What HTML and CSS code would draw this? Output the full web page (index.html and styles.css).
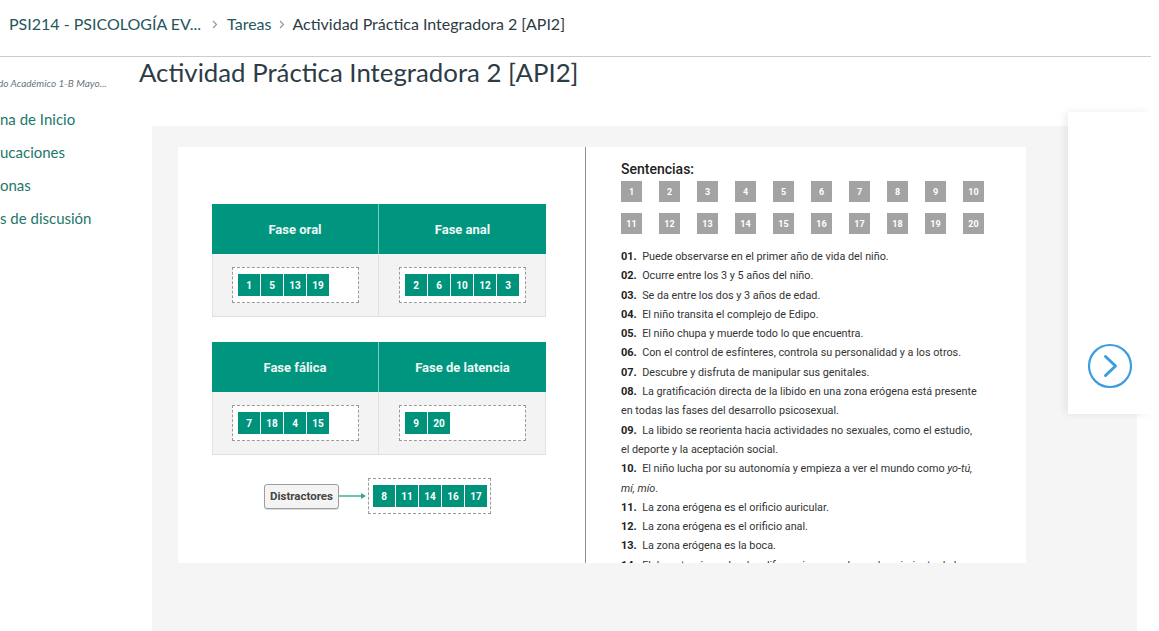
FILE: index.html
```html
<!DOCTYPE html>
<html lang="es">
<head>
<meta charset="utf-8">
<title>Actividad Práctica Integradora 2 [API2]</title>
<link rel="stylesheet" href="styles.css">
</head>
<body>
<div class="app">
  <header class="topbar">
    <nav class="crumbs">
      <a class="crumb-link">PSI214 - PSICOLOGÍA EV...</a>
      <svg class="chev" width="6" height="9" viewBox="0 0 6 9"><path d="M1 1l3.5 3.5L1 8" fill="none" stroke="#8b969e" stroke-width="1.1"/></svg>
      <a class="crumb-link">Tareas</a>
      <svg class="chev chev-last" width="6" height="9" viewBox="0 0 6 9"><path d="M1 1l3.5 3.5L1 8" fill="none" stroke="#8b969e" stroke-width="1.1"/></svg>
      <span class="crumb-current">Actividad Práctica Integradora 2 [API2]</span>
    </nav>
  </header>

  <div class="layout">
    <aside class="sidebar">
      <div class="term">do Académico 1-B Mayo...</div>
      <ul class="nav">
        <li>na de Inicio</li>
        <li>ucaciones</li>
        <li>onas</li>
        <li>s de discusión</li>
      </ul>
    </aside>

    <main class="content">
      <h1 class="title">Actividad Práctica Integradora 2 [API2]</h1>
      <div class="viewer">
        <div class="slide">
          <div class="slide-left">
            <div class="phase-table">
              <div class="phase-head">Fase oral</div>
              <div class="phase-head">Fase anal</div>
              <div class="phase-cell"><div class="drop"><span class="chip">1</span><span class="chip">5</span><span class="chip">13</span><span class="chip">19</span></div></div>
              <div class="phase-cell"><div class="drop"><span class="chip">2</span><span class="chip">6</span><span class="chip">10</span><span class="chip">12</span><span class="chip">3</span></div></div>
            </div>
            <div class="phase-table">
              <div class="phase-head">Fase fálica</div>
              <div class="phase-head">Fase de latencia</div>
              <div class="phase-cell"><div class="drop"><span class="chip">7</span><span class="chip">18</span><span class="chip">4</span><span class="chip">15</span></div></div>
              <div class="phase-cell"><div class="drop"><span class="chip">9</span><span class="chip">20</span></div></div>
            </div>
            <div class="distract-row">
              <div class="distract-label">Distractores</div>
              <svg class="arrow" width="29" height="8" viewBox="0 0 29 8"><path d="M0 4h23" stroke="#2fa896" stroke-width="1.4"/><path d="M22 1l5 3-5 3z" fill="#2fa896"/></svg>
              <div class="drop drop-distract"><span class="chip">8</span><span class="chip">11</span><span class="chip">14</span><span class="chip">16</span><span class="chip">17</span></div>
            </div>
          </div>
          <div class="slide-right">
            <div class="sent-title">Sentencias:</div>
            <div class="num-grid">
              <span class="num">1</span><span class="num">2</span><span class="num">3</span><span class="num">4</span><span class="num">5</span><span class="num">6</span><span class="num">7</span><span class="num">8</span><span class="num">9</span><span class="num">10</span>
              <span class="num">11</span><span class="num">12</span><span class="num">13</span><span class="num">14</span><span class="num">15</span><span class="num">16</span><span class="num">17</span><span class="num">18</span><span class="num">19</span><span class="num">20</span>
            </div>
            <div class="sentences">
              <p><b>01.</b>&nbsp; Puede observarse en el primer año de vida del niño.</p>
              <p><b>02.</b>&nbsp; Ocurre entre los 3 y 5 años del niño.</p>
              <p><b>03.</b>&nbsp; Se da entre los dos y 3 años de edad.</p>
              <p><b>04.</b>&nbsp; El niño transita el complejo de Edipo.</p>
              <p><b>05.</b>&nbsp; El niño chupa y muerde todo lo que encuentra.</p>
              <p><b>06.</b>&nbsp; Con el control de esfínteres, controla su personalidad y a los otros.</p>
              <p><b>07.</b>&nbsp; Descubre y disfruta de manipular sus genitales.</p>
              <p><b>08.</b>&nbsp; La gratificación directa de la libido en una zona erógena está presente<br>en todas las fases del desarrollo psicosexual.</p>
              <p><b>09.</b>&nbsp; La libido se reorienta hacia actividades no sexuales, como el estudio,<br>el deporte y la aceptación social.</p>
              <p><b>10.</b>&nbsp; El niño lucha por su autonomía y empieza a ver el mundo como <i>yo-tú,</i><br><i>mí, mío</i>.</p>
              <p><b>11.</b>&nbsp; La zona erógena es el orificio auricular.</p>
              <p><b>12.</b>&nbsp; La zona erógena es el orificio anal.</p>
              <p><b>13.</b>&nbsp; La zona erógena es la boca.</p>
              <p><b>14.</b>&nbsp; Elabora teorías sobre las diferencias sexuales y el nacimiento de los</p>
            </div>
          </div>
        </div>
      </div>
    </main>
  </div>

  <div class="side-panel">
    <svg class="next-btn" width="46" height="46" viewBox="0 0 46 46">
      <circle cx="23" cy="23" r="21" fill="none" stroke="#3b9de0" stroke-width="2.2"/>
      <path d="M18.5 13.5l10 9.5-10 9.5" fill="none" stroke="#3b9de0" stroke-width="3" stroke-linecap="round" stroke-linejoin="round"/>
    </svg>
  </div>
</div>
</body>
</html>
```

FILE: styles.css
```css
* { box-sizing: border-box; }
html, body { margin: 0; padding: 0; background: #fff; overflow: hidden; }
body { font-family: Lato, "Open Sans", sans-serif; color: #2d3b45; }

.app { position: relative; width: 1151px; height: 631px; overflow: hidden; }

.topbar {
  height: 57px;
  border-bottom: 1px solid #c7cdd1;
  display: flex;
  align-items: flex-start;
}
.crumbs {
  display: flex;
  align-items: center;
  height: 24px;
  margin-top: 11px;
  padding-left: 9px;
  font-size: 16px;
}
.crumb-link { color: #26555c; text-decoration: none; }
.crumb-current { color: #2d3b45; }
.chev { margin: 2px 9px 0 11px; }
.chev-last { margin: 2px 7px 0 8px; }

.layout { display: flex; }

.sidebar { width: 139px; flex: none; padding-top: 20px; }
.term {
  font-size: 10px;
  font-style: italic;
  color: #6b7780;
  line-height: 13px;
  margin-left: -2px;
  white-space: nowrap;
}
.nav { list-style: none; margin: 19px 0 0; padding: 0; }
.nav li {
  font-size: 15px;
  line-height: 20px;
  height: 33px;
  color: #23776b;
  white-space: nowrap;
}

.content { flex: 1; }
.title {
  margin: 0;
  font-size: 25.8px;
  font-weight: 400;
  line-height: 30px;
  color: #2d3b45;
}
.viewer {
  margin: 39px 0 0 13px;
  width: 985px;
  height: 520px;
  background: #f5f5f5;
  padding: 21px 0 0 26px;
}
.slide {
  width: 848px;
  height: 416px;
  background: #fff;
  display: flex;
  overflow: hidden;
  font-family: Roboto, "Liberation Sans", sans-serif;
}

.slide-left {
  width: 408px;
  flex: none;
  border-right: 1px solid #8f8f8f;
  padding: 57px 0 0 34px;
}
.phase-table {
  width: 334px;
  display: grid;
  grid-template-columns: 166px 168px;
  margin-bottom: 25px;
}
.phase-head {
  height: 50px;
  background: #00957e;
  color: #eef8f5;
  font-weight: 700;
  font-size: 13px;
  display: flex;
  align-items: center;
  justify-content: center;
}
.phase-head:nth-child(2) { border-left: 1px solid #7ccabc; }
.phase-cell {
  height: 63px;
  background: #f3f3f3;
  border-bottom: 1px solid #dedede;
  border-left: 1px solid #e2e2e2;
  padding: 13px 0 0 19px;
}
.phase-cell:nth-child(4) { border-right: 1px solid #e2e2e2; padding-left: 20px; }
.drop {
  width: 127px;
  height: 36px;
  background: #fff;
  border: 1px dashed #9a9a9a;
  display: flex;
  align-items: center;
  gap: 1px;
  padding-left: 5px;
}
.chip {
  width: 22px;
  height: 22px;
  background: #00937c;
  color: #fff;
  font-weight: 700;
  font-size: 10px;
  display: flex;
  align-items: center;
  justify-content: center;
}
.distract-row {
  display: flex;
  align-items: center;
  margin-left: 52px;
  margin-top: -2px;
}
.distract-label {
  width: 75px;
  height: 25px;
  border: 1px solid #9d9d9d;
  border-radius: 3px;
  background: #f4f4f4;
  color: #444;
  font-weight: 700;
  font-size: 11.5px;
  display: flex;
  align-items: center;
  justify-content: center;
  box-shadow: 0 1px 1px rgba(0,0,0,0.15);
}
.arrow { flex: none; }
.drop-distract { width: 123px; height: 36px; padding-left: 4px; }

.slide-right { flex: 1; padding: 14px 0 0 35px; }
.sent-title {
  font-size: 14px;
  font-weight: 500;
  color: #1e1e1e;
  line-height: 17px;
  margin-bottom: 3px;
}
.num-grid {
  display: grid;
  grid-template-columns: repeat(10, 21px);
  column-gap: 17px;
  row-gap: 11px;
}
.num {
  width: 21px;
  height: 21px;
  background: #a3a3a3;
  color: #fff;
  font-weight: 700;
  font-size: 9px;
  display: flex;
  align-items: center;
  justify-content: center;
}
.sentences { margin-top: 13px; font-size: 10.8px; color: #333; }
.sentences p { margin: 0; line-height: 19.3px; white-space: nowrap; }
.sentences b { color: #222; font-size: 11px; }

.side-panel {
  position: absolute;
  left: 1068px;
  top: 112px;
  width: 82px;
  height: 302px;
  background: #fff;
  box-shadow: -3px 0 8px rgba(0,0,0,0.07);
}
.next-btn { position: absolute; left: 19px; top: 231px; }
```
